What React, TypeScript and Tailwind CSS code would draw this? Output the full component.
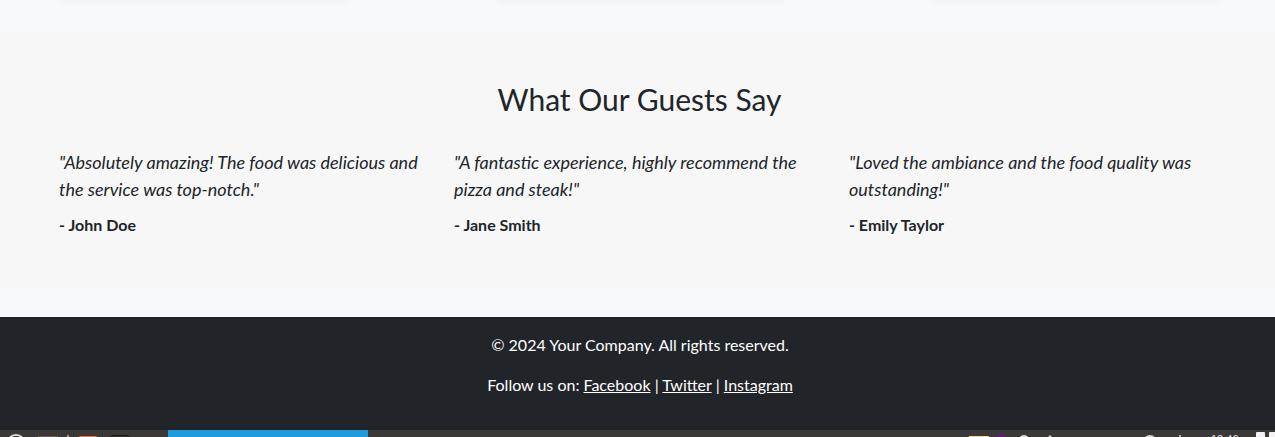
const reviews = [
  { quote: '"Absolutely amazing! The food was delicious and the service was top-notch."', author: 'John Doe' },
  { quote: '"A fantastic experience, highly recommend the pizza and steak!"', author: 'Jane Smith' },
  { quote: '"Loved the ambiance and the food quality was outstanding!"', author: 'Emily Taylor' },
];

function MenuCards() {
  return (
    <div className="flex h-[33px] justify-between overflow-hidden pr-[52px] pl-[57px]" aria-hidden="true">
      <div className="-mt-12 h-12 w-[292px] rounded-lg bg-white shadow-[0_0_10px_rgba(0,0,0,0.05)]" />
      <div className="-mt-12 h-12 w-[292px] rounded-lg bg-white shadow-[0_0_10px_rgba(0,0,0,0.05)]" />
      <div className="-mt-12 h-12 w-[292px] rounded-lg bg-white shadow-[0_0_10px_rgba(0,0,0,0.05)]" />
    </div>
  );
}

function Testimonials() {
  return (
    <section className="bg-[#f7f7f7] pt-12 pr-[43px] pb-[50px] pl-[47px]">
      <h2 className="mb-8 text-center text-[30px] leading-9">What Our Guests Say</h2>
      <div className="grid grid-cols-3">
        {reviews.map((r) => (
          <figure key={r.author} className="px-3">
            <blockquote className="mb-2.5 text-[18px] leading-[27px] italic">{r.quote}</blockquote>
            <figcaption className="text-base leading-6 font-bold">- {r.author}</figcaption>
          </figure>
        ))}
      </div>
    </section>
  );
}

function Footer() {
  return (
    <footer className="mt-[30px] bg-[#212529] pt-4 pb-[33px] pl-[5px] text-center text-base leading-6 text-white">
      <p className="mb-4">© 2024 Your Company. All rights reserved.</p>
      <p>
        Follow us on: <a href="#facebook" className="underline">Facebook</a> |{' '}
        <a href="#twitter" className="underline">Twitter</a> |{' '}
        <a href="#instagram" className="underline">Instagram</a>
      </p>
    </footer>
  );
}

function Taskbar() {
  return (
    <div className="flex h-[7px] items-start overflow-hidden bg-[#3b3838]">
      <svg className="h-[7px] w-[168px] shrink-0" viewBox="0 0 168 7" aria-hidden="true">
        <circle cx="16" cy="14" r="9" fill="none" stroke="#d8d8d8" strokeWidth="2" />
        <rect x="38" y="6" width="20" height="4" fill="#665f50" />
        <rect x="67" y="5" width="2" height="4" fill="#9a9a9a" />
        <rect x="79" y="6" width="18" height="6" rx="1" fill="#e9764c" />
        <rect x="111" y="5.500" width="18" height="8" rx="2" fill="#3b3838" stroke="#151515" />
      </svg>
      <div className="h-[7px] w-[200px] shrink-0 bg-[#1e9cdb]" />
      <svg className="ml-auto h-[7px] w-[307px] shrink-0" viewBox="0 0 307 7" aria-hidden="true">
        <rect x="1" y="6" width="20" height="5" fill="#eee29a" />
        <circle cx="33" cy="13" r="8" fill="#7d0b9b" />
        <circle cx="56" cy="10" r="5" fill="#d8d8d8" />
        <path d="M80 7l2-2 2 2z" fill="#d8d8d8" />
        <circle cx="182" cy="12" r="6" fill="none" stroke="#d8d8d8" strokeWidth="2" />
        <path d="M211 5h2v2h-2z" fill="#b0b0b0" />
        <text x="243" y="13" fill="#e0e0e0" fontSize="11" fontFamily="Liberation Sans, sans-serif">12:46</text>
        <rect x="288" y="2" width="9" height="8" rx="1" fill="#f5f2f5" />
        <rect x="301" y="2" width="9" height="8" rx="1" fill="#f5f2f5" />
      </svg>
    </div>
  );
}

export default function App() {
  return (
    <main className="bg-[#f8f9fb] font-['Lato',sans-serif] text-[#212529]">
      <MenuCards />
      <Testimonials />
      <Footer />
      <Taskbar />
    </main>
  );
}
